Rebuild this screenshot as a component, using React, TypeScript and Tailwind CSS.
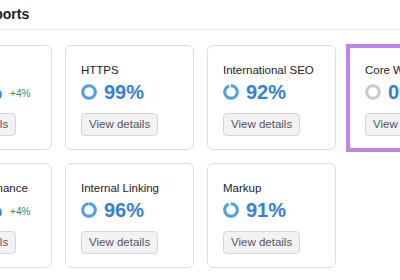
import React from 'react';

type Report = {
    title: string;
    value: number;
    delta?: string;
    highlight?: boolean;
};

const reports: Report[] = [
    { title: 'Crawlability', value: 87, delta: '+4%' },
    { title: 'HTTPS', value: 99 },
    { title: 'International SEO', value: 92 },
    { title: 'Core Web Vitals', value: 0, highlight: true },
    { title: 'Site Performance', value: 81, delta: '+4%' },
    { title: 'Internal Linking', value: 96 },
    { title: 'Markup', value: 91 },
];

// small donut that shows the score
const Ring = ({ value }: { value: number }) => {
    const r = 6.3;
    const c = 2 * Math.PI * r;
    const empty = value === 0;
    return (
        <svg width="16" height="16" viewBox="0 0 16 16" className="shrink-0">
            <circle cx="8" cy="8" r={r} fill="none" stroke={empty ? '#c9c9cc' : '#e3e6ea'} strokeWidth="3" />
            {!empty && (
                <circle
                    cx="8"
                    cy="8"
                    r={r}
                    fill="none"
                    stroke="#4f9fe9"
                    strokeWidth="3"
                    strokeDasharray={`${(c * value) / 100} ${c}`}
                    transform="rotate(-90 8 8)"
                />
            )}
        </svg>
    );
};

const ReportCard = ({ report }: { report: Report }) => (
    <div className="relative h-[105px] rounded-[6px] border border-[#dedee0] bg-white pl-[15px] pt-4">
        {report.highlight && (
            <div className="pointer-events-none absolute -top-[2px] -bottom-[3px] -left-[4px] -right-[4px] border-4 border-[#c581ea]" />
        )}
        <div className="h-4 text-[11.5px] leading-4 text-[#222] whitespace-nowrap">{report.title}</div>
        <div className="mt-[2px] flex h-6 items-center whitespace-nowrap">
            <Ring value={report.value} />
            <span className="ml-[7px] text-[20px] font-bold leading-6 text-[#3580d8]">{report.value}%</span>
            {report.delta && (
                <span className="ml-2 mt-[3px] text-[10px] text-[#3f8a5c]">{report.delta}</span>
            )}
        </div>
        <button className="mt-[9px] h-[23px] rounded-[4px] border border-[#d5d5d9] bg-[#f2f2f4] px-[7px] text-[11.5px] leading-none text-[#55565c] whitespace-nowrap">
            View details
        </button>
    </div>
);

export default function App() {
    return (
        <div
            className="h-[280px] w-[400px] overflow-hidden bg-white"
            style={{ fontFamily: '"Liberation Sans", Arial, sans-serif' }}
        >
            {/* 标题 */}
            <div className="h-[30px] border-b border-[#e8e8ea] pt-[4px]">
                <h2 className="-ml-[89px] whitespace-nowrap text-[14px] font-bold leading-5 text-[#1d1d1f]">
                    Thematic Reports
                </h2>
            </div>

            {/* 卡片 */}
            <div className="-ml-[77px] mt-[15px] grid w-[555px] grid-cols-[repeat(4,129px)] gap-[13px]">
                {reports.map((r) => (
                    <ReportCard key={r.title} report={r} />
                ))}
            </div>
        </div>
    );
}
